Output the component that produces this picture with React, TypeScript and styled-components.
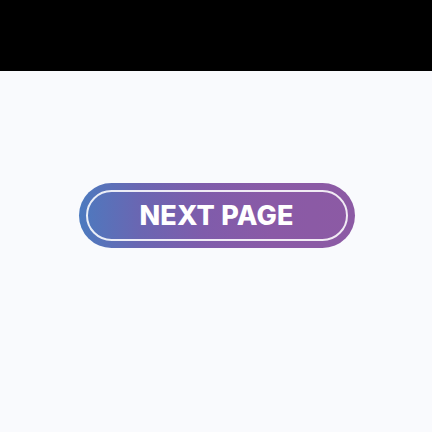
import styled, { createGlobalStyle } from "styled-components";

const Global = createGlobalStyle`
  html, body { margin: 0; padding: 0; }
  body { background: #f9fafd; font-family: Inter, "Liberation Sans", sans-serif; }
`;

const Page = styled.div`
  width: 432px;
  height: 432px;
  display: flex;
  flex-direction: column;
`;

const TopBar = styled.div`
  height: 71px;
  background: #000;
`;

const Stage = styled.main`
  flex: 1;
  display: flex;
  justify-content: center;
  padding-top: 112px;
  padding-left: 1px;
`;

const Button = styled.button`
  width: 276px;
  height: 65px;
  padding: 7px;
  border: none;
  border-radius: 33px;
  background: linear-gradient(90deg, #4c7abf 0%, #6a66b2 22%, #7f5cab 45%, #8a5aa6 70%, #8c5aa4 100%);
  cursor: pointer;
  display: flex;
`;

const Ring = styled.span`
  flex: 1;
  border: 2px solid rgba(255, 255, 255, 0.88);
  border-radius: 26px;
  display: flex;
  align-items: center;
  justify-content: center;
  color: #fff;
  font-family: Inter, "Liberation Sans", sans-serif;
  font-weight: 800;
  font-size: 27px;
  line-height: 1;
  letter-spacing: 0.2px;
  padding-bottom: 1px;
`;

export default function App() {
  return (
    <Page>
      <Global />
      <TopBar />
      <Stage>
        <Button>
          <Ring>NEXT PAGE</Ring>
        </Button>
      </Stage>
    </Page>
  );
}
